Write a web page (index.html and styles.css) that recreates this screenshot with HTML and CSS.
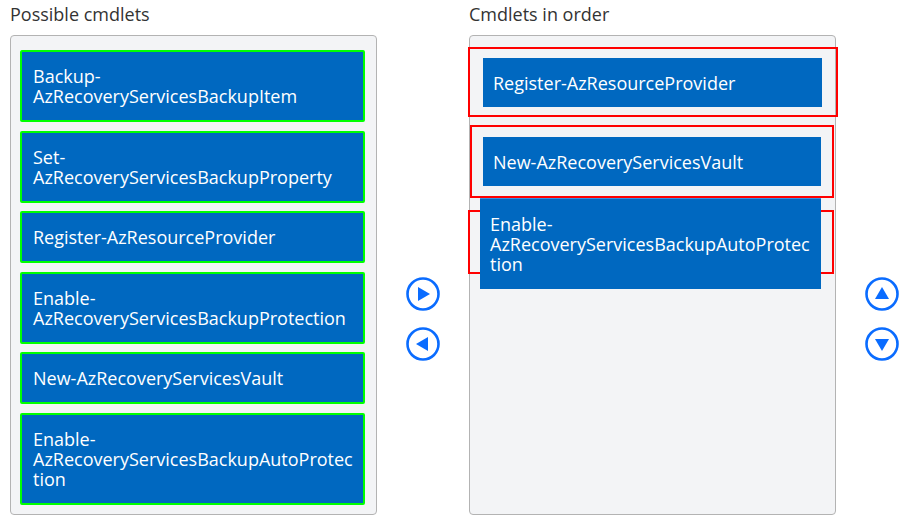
FILE: index.html
```html
<!DOCTYPE html>
<html>
<head>
<meta charset="utf-8">
<link rel="stylesheet" href="styles.css">
</head>
<body>
<div class="page">
  <section class="col">
    <h2 class="heading">Possible cmdlets</h2>
    <div class="box source">
      <div class="item">Backup-AzRecoveryServicesBackupItem</div>
      <div class="item">Set-AzRecoveryServicesBackupProperty</div>
      <div class="item">Register-AzResourceProvider</div>
      <div class="item">Enable-AzRecoveryServicesBackupProtection</div>
      <div class="item">New-AzRecoveryServicesVault</div>
      <div class="item">Enable-AzRecoveryServicesBackupAutoProtection</div>
    </div>
  </section>
  <div class="controls">
    <button class="circ" aria-label="Move right"><svg viewBox="0 0 34 34" width="34" height="34"><circle cx="17" cy="17" r="15.5" fill="none" stroke="#0a6cff" stroke-width="2.6"/><polygon points="12,10 24,17 12,24" fill="#0a6cff"/></svg></button>
    <button class="circ" aria-label="Move left"><svg viewBox="0 0 34 34" width="34" height="34"><circle cx="17" cy="17" r="15.5" fill="none" stroke="#0a6cff" stroke-width="2.6"/><polygon points="22,10 10,17 22,24" fill="#0a6cff"/></svg></button>
  </div>
  <section class="col">
    <h2 class="heading">Cmdlets in order</h2>
    <div class="box target">
      <div class="zone z1"><div class="slot">Register-AzResourceProvider</div></div>
      <div class="zone z2"><div class="slot">New-AzRecoveryServicesVault</div></div>
      <div class="zone z3"><div class="slot dragged">Enable-AzRecoveryServicesBackupAutoProtection</div></div>
    </div>
  </section>
  <div class="controls">
    <button class="circ" aria-label="Move up"><svg viewBox="0 0 34 34" width="34" height="34"><circle cx="17" cy="17" r="15.5" fill="none" stroke="#0a6cff" stroke-width="2.6"/><polygon points="10,22 17,10 24,22" fill="#0a6cff"/></svg></button>
    <button class="circ" aria-label="Move down"><svg viewBox="0 0 34 34" width="34" height="34"><circle cx="17" cy="17" r="15.5" fill="none" stroke="#0a6cff" stroke-width="2.6"/><polygon points="10,12 24,12 17,24" fill="#0a6cff"/></svg></button>
  </div>
</div>
</body>
</html>
```

FILE: styles.css
```css
html, body {
  margin: 0;
  padding: 0;
  background: #ffffff;
  font-family: "Open Sans", "Noto Sans", sans-serif;
}

.page {
  display: flex;
  align-items: flex-start;
  padding-left: 10px;
}

.col {
  width: 367px;
  flex: none;
}

.heading {
  margin: 0;
  padding: 3px 0 10px;
  font-size: 18px;
  font-weight: 400;
  line-height: 22px;
  color: #333333;
}

.box {
  box-sizing: border-box;
  height: 480px;
  border: 1px solid #b3b3b3;
  border-radius: 4px;
  background: #f3f4f6;
}

.source {
  display: flex;
  flex-direction: column;
  gap: 8.5px;
  padding: 14px 11px 9px 9px;
}

.item {
  background: #0068c0;
  color: #ffffff;
  border: 2px solid #00ff00;
  border-radius: 2px;
  padding: 14px 10px 14px 11px;
  font-size: 18px;
  line-height: 20px;
  overflow-wrap: anywhere;
}

.controls {
  flex: none;
  width: 92px;
  display: flex;
  flex-direction: column;
  align-items: center;
  gap: 16px;
  padding-top: 277px;
}

.circ {
  width: 34px;
  height: 34px;
  padding: 0;
  border: 0;
  background: transparent;
  display: block;
}

.circ svg {
  display: block;
}

.target {
  padding: 11px 0 0 0;
}

.zone {
  border: 2px solid #ff0000;
}

.z1 {
  margin: 0 -3px 0 -2px;
  padding: 9px 14px 8px 13px;
}

.z2 {
  margin: 8px 1px 0 0;
  padding: 10px 11px;
}

.z3 {
  position: relative;
  margin: 12px 1px 0 -2px;
  height: 60px;
}

.slot {
  background: #0068c0;
  color: #ffffff;
  padding: 15px 10px 14px;
  font-size: 18px;
  line-height: 20px;
  overflow-wrap: anywhere;
}

.dragged {
  position: absolute;
  top: -14px;
  left: 10px;
  width: 321px;
  padding: 15px 10px;
  border-top: 1px solid #3a8ee0;
  box-sizing: content-box;
}
```
